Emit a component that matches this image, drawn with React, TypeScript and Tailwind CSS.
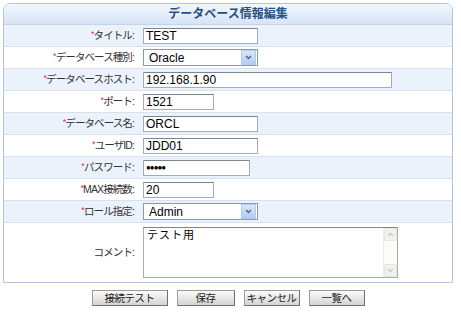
import React from 'react';

const FONT = { fontFamily: '"Liberation Sans", "Noto Sans CJK JP", sans-serif' };

type Row = {
  label: string;
  kind: 'text' | 'select' | 'password';
  value: string;
  width: string;
};

const ROWS: Row[] = [
  { label: 'タイトル', kind: 'text', value: 'TEST', width: 'w-[115px]' },
  { label: 'データベース種別', kind: 'select', value: 'Oracle', width: 'w-[115px]' },
  { label: 'データベースホスト', kind: 'text', value: '192.168.1.90', width: 'w-[249px]' },
  { label: 'ポート', kind: 'text', value: '1521', width: 'w-[71px]' },
  { label: 'データベース名', kind: 'text', value: 'ORCL', width: 'w-[115px]' },
  { label: 'ユーザID', kind: 'text', value: 'JDD01', width: 'w-[115px]' },
  { label: 'パスワード', kind: 'password', value: '●●●●●', width: 'w-[107px]' },
  { label: 'MAX接続数', kind: 'text', value: '20', width: 'w-[71px]' },
  { label: 'ロール指定', kind: 'select', value: 'Admin', width: 'w-[115px]' },
];

const Chevron = ({ up }: { up?: boolean }) => (
  <svg width="7" height="5" viewBox="0 0 7 5">
    <path
      d={up ? 'M1 4 L3.5 1.5 L6 4' : 'M1 1 L3.5 3.5 L6 1'}
      fill="none"
      stroke="currentColor"
      strokeWidth="1.4"
    />
  </svg>
);

const Field = ({ row }: { row: Row }) => {
  if (row.kind === 'select') {
    return (
      <div className={`${row.width} h-[17px] flex items-center border border-[#7f9db9] bg-white`}>
        <span className="flex-1 pl-[5px] text-[12px] text-black leading-none">{row.value}</span>
        <div className="w-[15px] h-[15px] mr-px flex items-center justify-center bg-gradient-to-b from-[#dbe6fb] to-[#b5c9f2] border border-[#b7c9ee] text-[#4d6185]">
          <Chevron />
        </div>
      </div>
    );
  }
  return (
    <div
      className={`${row.width} h-[16px] flex items-center border border-[#a5acb5] border-t-[#7d848d] bg-white pl-[2px] text-black leading-none ${
        row.kind === 'password' ? 'text-[8px] tracking-[-1px]' : 'text-[12px]'
      }`}
    >
      {row.value}
    </div>
  );
};

const Label = ({ children, req }: { children: React.ReactNode; req?: boolean }) => (
  <div className="w-[139px] pr-[9px] text-right text-[10.5px] tracking-[-0.9px] text-[#333] leading-none whitespace-nowrap">
    {req && <span className="text-[#e53333] text-[9px] align-top">*</span>}
    {children}
  </div>
);

export default function App() {
  return (
    <div className="w-[461px] h-[314px] bg-white pt-[3px] pl-[3px]" style={FONT}>
      <div className="w-[450px] border border-[#b3c6e0] rounded-t-[7px] overflow-hidden">
        {/* Header */}
        <div className="h-[21px] flex items-center justify-center bg-gradient-to-b from-[#f2f7fd] to-[#d7e4f5] border-b border-[#c3d3e8] text-[12px] font-bold text-[#2b4f86]">
          データベース情報編集
        </div>

        {ROWS.map((row, i) => (
          <div
            key={row.label}
            className={`h-[22px] flex items-center border-b border-[#d8e2ef] ${i % 2 === 0 ? 'bg-[#ebf2fc]' : 'bg-white'}`}
          >
            <Label req>{row.label}:</Label>
            <Field row={row} />
          </div>
        ))}

        {/* Comment */}
        <div className="h-[59px] flex items-center bg-white">
          <Label>コメント:</Label>
          <div className="w-[255px] h-[51px] flex border border-[#a5acb5] border-t-[#7d848d] bg-white">
            <div className="flex-1 pl-[3px] pt-[1px] text-[11px] tracking-[1px] text-black leading-tight">テスト用</div>
            <div className="w-[14px] flex flex-col justify-between bg-[#fbfbf7] border-l border-[#eeeee8] text-[#c9cbc5]">
              <div className="h-[13px] flex items-center justify-center bg-[#f2f2ec] border border-[#e6e6df] rounded-[2px]">
                <Chevron up />
              </div>
              <div className="h-[13px] flex items-center justify-center bg-[#f2f2ec] border border-[#e6e6df] rounded-[2px]">
                <Chevron />
              </div>
            </div>
          </div>
        </div>
      </div>

      {/* Buttons */}
      <div className="w-[450px] flex justify-center gap-[9px] mt-[7px]">
        {[
          { t: '接続テスト', w: 'w-[76px]' },
          { t: '保存', w: 'w-[58px]' },
          { t: 'キャンセル', w: 'w-[56px]' },
          { t: '一覧へ', w: 'w-[56px]' },
        ].map(b => (
          <button
            key={b.t}
            className={`${b.w} h-[16px] flex items-center justify-center whitespace-nowrap border border-[#6f6f6f] border-t-[#9a9a9a] border-l-[#9a9a9a] bg-gradient-to-b from-[#fbfbfb] to-[#d4d4d4] text-[10.5px] tracking-[-0.5px] text-[#222] leading-none`}
          >
            {b.t}
          </button>
        ))}
      </div>
    </div>
  );
}
